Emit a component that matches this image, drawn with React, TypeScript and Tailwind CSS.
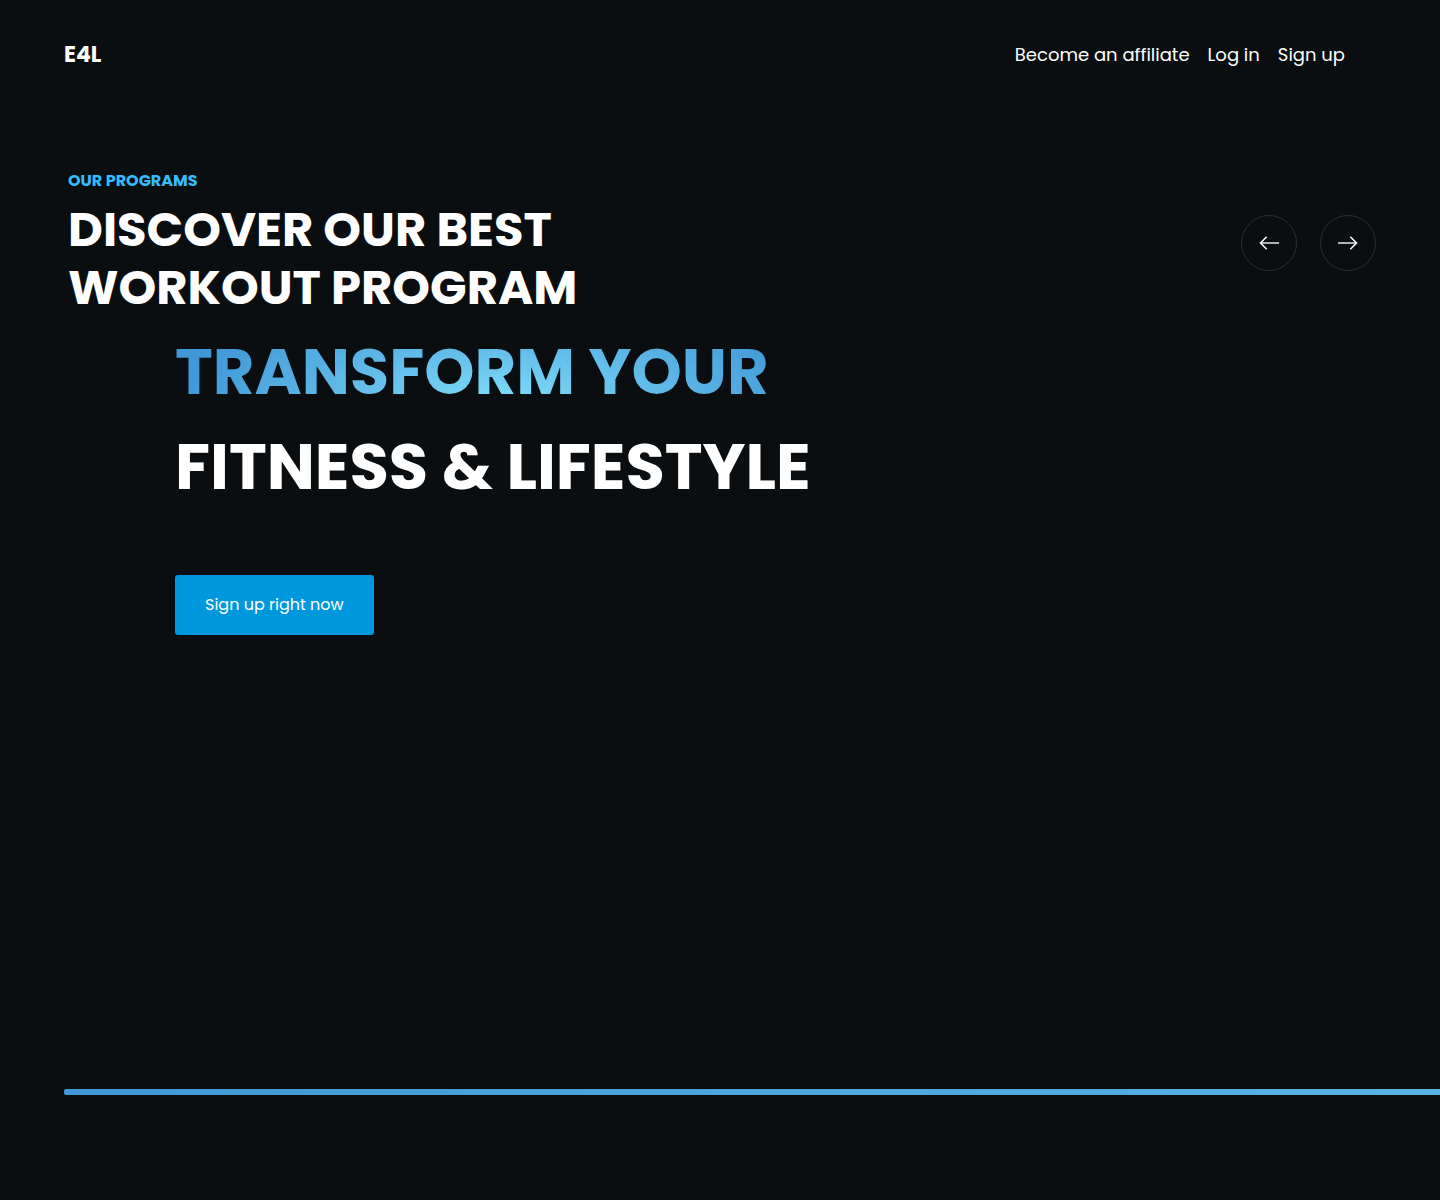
import React, { useRef } from 'react';

const navLinks = [
  { label: 'Become an affiliate', href: '#affiliate' },
  { label: 'Log in', href: '#login' },
  { label: 'Sign up', href: '#signup' },
];

function ArrowIcon({ direction }: { direction: 'left' | 'right' }) {
  return (
    <svg
      width="24"
      height="24"
      viewBox="0 0 24 24"
      fill="none"
      stroke="currentColor"
      strokeWidth="1.5"
      aria-hidden="true"
    >
      {direction === 'left' ? (
        <>
          <path d="M22 12H4" strokeOpacity="0.9" />
          <path d="M9.7 5.8L3.5 12l6.2 6.2" />
        </>
      ) : (
        <>
          <path d="M2 12h18" strokeOpacity="0.9" />
          <path d="M14.3 5.8l6.2 6.2-6.2 6.2" />
        </>
      )}
    </svg>
  );
}

function Header() {
  return (
    <header className="flex items-center justify-between pt-[41px] pl-16 pr-[95px]">
      <a href="#home" className="text-[22px] leading-7 font-bold">
        E4L
      </a>
      <nav className="flex gap-[18px] text-lg leading-7">
        {navLinks.map((link) => (
          <a key={link.label} href={link.href}>
            {link.label}
          </a>
        ))}
      </nav>
    </header>
  );
}

export default function App() {
  const trackRef = useRef<HTMLDivElement>(null);

  const slide = (amount: number) => {
    trackRef.current?.scrollBy({ left: amount, behavior: 'smooth' });
  };

  return (
    <div className="flex min-h-screen flex-col overflow-x-hidden bg-[#0a0e10] font-['Poppins',Inter,sans-serif] text-white">
      <Header />

      <main>
        {/* Programs */}
        <section className="flex items-start justify-between pt-[100px] pl-[68px] pr-16">
          <div>
            <p className="text-base leading-6 font-bold text-[#35bdff]">
              OUR PROGRAMS
            </p>
            <h2 className="mt-2 text-5xl leading-[58px] font-bold">
              DISCOVER OUR BEST
              <br />
              WORKOUT PROGRAM
            </h2>
          </div>
          <div className="mt-[46px] flex gap-[23px]">
            <button
              onClick={() => slide(-400)}
              aria-label="Previous program"
              className="flex size-14 items-center justify-center rounded-full border border-[#2a2f31]"
            >
              <ArrowIcon direction="left" />
            </button>
            <button
              onClick={() => slide(400)}
              aria-label="Next program"
              className="flex size-14 items-center justify-center rounded-full border border-[#2a2f31]"
            >
              <ArrowIcon direction="right" />
            </button>
          </div>
        </section>

        {/* Hero */}
        <section className="flex flex-col items-start pt-[7px] pl-[175px]">
          <h1 className="flex flex-col items-start text-[64px] leading-[95px] font-bold">
            <span className="bg-radial-[320px_110px_at_55%_80%] from-[#80dcfa] to-[#4098d7] bg-clip-text text-transparent">
              TRANSFORM YOUR
            </span>
            <span>FITNESS &amp; LIFESTYLE</span>
          </h1>
          <button className="mt-[61px] rounded-[3px] bg-[#0098dd] px-[30px] py-[18px] text-base leading-6">
            Sign up right now
          </button>
        </section>

        {/* Slider track */}
        <div
          ref={trackRef}
          className="mt-[454px] ml-16 h-1.5 rounded-l-xs bg-linear-to-r from-[#4098d7] to-[#58b2e3]"
        />
      </main>
    </div>
  );
}
